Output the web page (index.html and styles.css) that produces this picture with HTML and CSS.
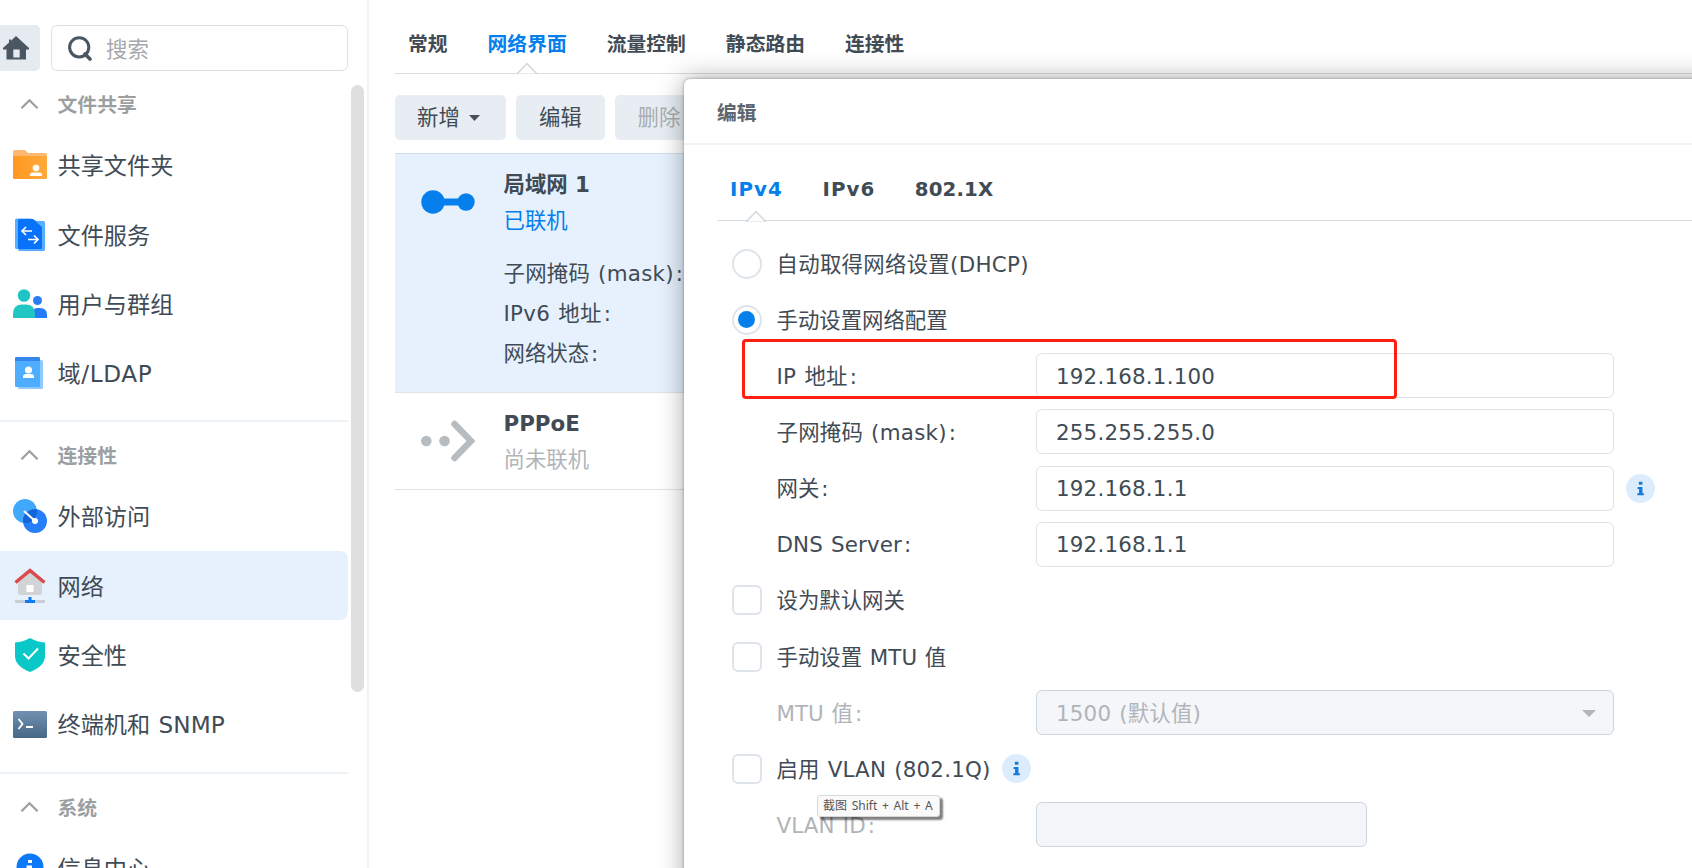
FILE: index.html
```html
<!DOCTYPE html>
<html lang="zh-CN">
<head>
<meta charset="utf-8">
<title>网络</title>
<link rel="stylesheet" href="styles.css">
</head>
<body>
<div class="app">
  <aside class="sidebar">
    <div class="top">
      <div class="home"><svg width="26" height="24" viewBox="0 0 26 24"><path fill="#4a5662" d="M13 0 26 12v1.500h-3V23.500H3.500V13.500H0V12L6 6.500V3.500h2v1.200zM10.300 13.500v8h6.400v-8z" fill-rule="evenodd"/></svg></div>
      <div class="search">
        <svg width="24" height="25" viewBox="0 0 24 25" fill="none" stroke="#4a5662" stroke-width="3"><circle cx="11.200" cy="11.300" r="9.600"/><path d="M17 18l5 5" stroke-width="3.600" stroke-linecap="round"/></svg>
        <span>搜索</span>
      </div>
    </div>
    <div class="group">
      <div class="group-title"><svg class="chev" viewBox="0 0 20 12"><path d="M1.500 10.500 10 2l8.500 8.500"/></svg>文件共享</div>
      <div class="item"><svg class="ico" viewBox="0 0 34 34"><defs><linearGradient id="or"><stop offset="0" stop-color="#ff9820"/><stop offset="1" stop-color="#ffa93c"/></linearGradient></defs><path d="M0 3.500Q0 2 1.500 2H12l3 3h17q2 0 2 2v8H0z" fill="#ffb871"/><path d="M0 8h34v21.500q0 1.500-1.500 1.500h-31Q0 31 0 29.500z" fill="url(#or)"/><circle cx="23" cy="20" r="3.300" fill="#fff"/><path d="M17 28v-1q0-2.500 2.500-2.500h7q2.500 0 2.500 2.500v1z" fill="#fff"/></svg>共享文件夹</div>
      <div class="item"><svg class="ico" viewBox="0 0 34 34"><path d="M2 2q0-1.500 1.500-1.500H18l3 2.500h9.500Q32 3 32 4.500v27q0 1.500-1.500 1.500h-24Q5 33 5 31H3.500Q2 31 2 29.500z" fill="#57adff"/><path d="M5 2.500q0-1.500 1.500-1.500H20l9 6v22.500q0 1.500-1.500 1.500h-21Q5 31 5 29.500z" fill="#0872fa"/><path d="M20 1l9 5.500V9z" fill="#60b3ff"/><path d="M19 13H9m4-4-4 4 4 4M15 21.500h10m-4-4 4 4-4 4" fill="none" stroke="#fff" stroke-width="1.700"/></svg>文件服务</div>
      <div class="item"><svg class="ico" viewBox="0 0 34 34"><circle cx="11" cy="8.500" r="6.300" fill="#20c4c6"/><circle cx="24.500" cy="13.500" r="4.500" fill="#2a7cf5"/><path d="M19 31q-1-10 5-10h3q7 0 7 7v3z" fill="#267cf8"/><path d="M0 31v-4q0-9.500 9-9.500h4q9 0 9 9.500v4z" fill="#20c6c2"/></svg>用户与群组</div>
      <div class="item"><svg class="ico" viewBox="0 0 34 34"><rect x="5" y="4" width="25" height="29" rx="1.500" fill="#8ccaff"/><rect x="2" y="1" width="25" height="30" rx="1.500" fill="#4eadff"/><path d="M2 5V2.500Q2 1 3.500 1h22Q27 1 27 2.500V5z" fill="#3586ee"/><circle cx="15.500" cy="14" r="3.500" fill="#fff"/><path d="M10 22v-1q0-3 3-3h5q3 0 3 3v1z" fill="#fff"/></svg><span class="ldap">域/LDAP</span></div>
    </div>
    <div class="group">
      <div class="group-title"><svg class="chev" viewBox="0 0 20 12"><path d="M1.500 10.500 10 2l8.500 8.500"/></svg>连接性</div>
      <div class="item"><svg class="ico" viewBox="0 0 34 34"><circle cx="12" cy="12" r="12" fill="#41a9fc"/><circle cx="22" cy="22" r="12" fill="#267efb"/><path d="M23.900 10.200A12 12 0 0 1 10.200 23.900 12 12 0 0 1 23.900 10.200z" fill="#1564d8"/><path d="M11 12l11 10" stroke="#fff" stroke-width="2"/><circle cx="22" cy="22" r="3" fill="#fff"/></svg>外部访问</div>
      <div class="item active"><svg class="ico" viewBox="0 0 34 36"><path d="M5 14 17 4l12 10v11q0 2-2 2H7q-2 0-2-2z" fill="#d1d3d6"/><path d="M2.500 14.500 17 2.500l14.500 12" fill="none" stroke="#d84a4b" stroke-width="3.500"/><rect x="13.500" y="17" width="7" height="7" fill="#fff"/><path d="M2 32h30v3H2z" fill="#c9ced6"/><path d="M15.500 29h3v3H22v3H12v-3h3.500z" fill="#0d7bf5"/></svg>网络</div>
      <div class="item"><svg class="ico" viewBox="0 0 34 34"><path d="M17 0q7 4 15 4.500V18q0 10-15 16Q2 28 2 18V4.500Q10 4 17 0z" fill="#09c8c7"/><path d="m10.500 15.500 5 5 9.500-10" fill="none" stroke="#fff" stroke-width="2"/></svg>安全性</div>
      <div class="item"><svg class="ico" viewBox="0 0 34 34"><defs><linearGradient id="tm" x2="0" y2="1"><stop offset="0" stop-color="#7291b2"/><stop offset="1" stop-color="#466786"/></linearGradient></defs><rect y="4" width="34" height="27" rx="1.500" fill="url(#tm)"/><path d="m5.500 12 4 5-4 5M13 20h7" fill="none" stroke="#fff" stroke-width="1.800"/></svg><span>终端机和 SNMP</span></div>
    </div>
    <div class="group">
      <div class="group-title"><svg class="chev" viewBox="0 0 20 12"><path d="M1.500 10.500 10 2l8.500 8.500"/></svg>系统</div>
      <div class="item"><svg class="ico" viewBox="0 0 34 34"><circle cx="17" cy="16" r="13.500" fill="#0c79f8"/><path d="M15 9h4v3h-4zM13.500 14.500h5.500V22h2v2h-7.500v-2h2v-5h-2z" fill="#fff"/></svg>信息中心</div>
    </div>
    <div class="scroll"></div>
  </aside>

  <main class="main">
    <nav class="tabs">
      <span>常规</span>
      <span class="on">网络界面<svg class="caret" viewBox="0 0 20 12"><path d="M1 11 10 1.500 19 11v1H1z" fill="#fff"/><path d="M0 11h1L10 1.500 19 11h1"/></svg></span>
      <span>流量控制</span><span>静态路由</span><span>连接性</span>
    </nav>
    <div class="buttons">
      <div class="btn add">新增<svg width="11" height="6" viewBox="0 0 11 6"><path d="M0 0h11L5.500 6z" fill="#4a5058"/></svg></div>
      <div class="btn edit">编辑</div>
      <div class="btn del">删除</div>
    </div>
    <div class="list">
      <div class="net lan">
        <svg class="net-ico" width="54" height="24" viewBox="0 0 54 24" fill="#057feb"><circle cx="12" cy="12" r="11.700"/><path d="M20 8.500h20v7H20z"/><circle cx="45" cy="12" r="8.700"/></svg>
        <div class="net-text"><b>局域网 1</b><span class="blue">已联机</span><div class="props"><span class="mask">子网掩码 (mask)<i>:</i></span><span class="v6">IPv6 地址<i>:</i></span><span>网络状态<i>:</i></span></div></div>
      </div>
      <div class="net ppp">
        <svg class="net-ico" width="54" height="42" viewBox="0 0 54 42" fill="#b7bcc0"><circle cx="5.300" cy="21" r="5.300"/><circle cx="23.500" cy="21" r="5.300"/><path d="M33.500 4 50 21 33.500 38" fill="none" stroke="#b7bcc0" stroke-width="6.500" stroke-linecap="round"/></svg>
        <div class="net-text"><b class="ppp-name">PPPoE</b><span class="off">尚未联机</span></div>
      </div>
    </div>
  </main>

  <section class="dialog">
    <header>编辑</header>
    <nav class="dtabs">
      <span class="on">IPv4<svg class="caret" viewBox="0 0 20 12"><path d="M1 11 10 1.500 19 11v1H1z" fill="#fff"/><path d="M0 11h1L10 1.500 19 11h1"/></svg></span><span>IPv6</span><span class="x">802.1X</span>
    </nav>
    <div class="form">
      <div class="row"><div class="radio"></div><label class="dhcp">自动取得网络设置(DHCP)</label></div>
      <div class="row"><div class="radio sel"></div><label>手动设置网络配置</label></div>
      <div class="row sub"><label class="v6">IP 地址<i>:</i></label><div class="input">192.168.1.100</div></div>
      <div class="row sub"><label class="mask">子网掩码 (mask)<i>:</i></label><div class="input">255.255.255.0</div></div>
      <div class="row sub"><label>网关<i>:</i></label><div class="input">192.168.1.1</div><svg class="info" viewBox="0 0 30 30"><circle cx="15" cy="15" r="15" fill="#dcecfc"/><path d="M13.300 8h3.700v3.200h-3.700zM12 13.500h5v6.300h1.500V22H11.700v-2.200h1.800v-4.300H12z" fill="#147cdc"/></svg></div>
      <div class="row sub"><label class="dns">DNS Server<i>:</i></label><div class="input">192.168.1.1</div></div>
      <div class="row"><div class="check"></div><label>设为默认网关</label></div>
      <div class="row"><div class="check"></div><label>手动设置 MTU 值</label></div>
      <div class="row sub dim"><label>MTU 值<i>:</i></label><div class="input gray"><span>1500 (默认值)</span><svg width="14" height="7" viewBox="0 0 14 7"><path d="M0 0h14L7 7z" fill="#b2b5b8"/></svg></div></div>
      <div class="row"><div class="check"></div><label class="vlan">启用 VLAN (802.1Q)</label><svg class="info" viewBox="0 0 30 30"><circle cx="15" cy="15" r="15" fill="#dcecfc"/><path d="M13.300 8h3.700v3.200h-3.700zM12 13.500h5v6.300h1.500V22H11.700v-2.200h1.800v-4.300H12z" fill="#147cdc"/></svg></div>
      <div class="row sub dim"><label class="vid">VLAN ID<i>:</i></label><div class="input gray short"></div></div>
    </div>
  </section>
  <div class="mark"></div>
  <div class="tip">截图 Shift + Alt + A</div>
</div>
</body>
</html>
```
FILE: styles.css
```css
* { box-sizing: border-box; }
body { margin: 0; font-family: "DejaVu Sans", "Noto Sans CJK SC", sans-serif; font-size: 21.400px; line-height: 26px; word-spacing: 1px; color: #414b55; background: #fff; }
svg { display: block; flex: none; }
i { font-style: normal; padding-left: 2px; }
.app { position: relative; width: 1692px; height: 868px; overflow: hidden; display: flex; }

.sidebar { position: relative; width: 369px; height: 868px; flex: none; overflow: hidden; border-right: 2px solid #f1f2f3; }
.top { display: flex; gap: 11px; padding-top: 25px; height: 70.300px; }
.home { width: 40px; height: 46px; flex: none; background: #e6ebf1; border-radius: 0 5px 5px 0; padding: 11px 0 0 3px; }
.search { width: 297px; height: 46px; flex: none; display: flex; align-items: center; gap: 14px; padding-left: 16px; border: 1.500px solid #dde1e5; border-radius: 6px; color: #a6a9ac; }
.search span { padding-top: 3px; }
.group { height: 352px; width: 348px; padding-top: 8px; border-bottom: 2px solid #edf2f6; }
.group + .group { padding-top: 7px; }
.group-title { display: flex; align-items: center; height: 52px; gap: 18.500px; padding: 3px 0 0 20px; font-size: 19.850px; font-weight: bold; color: #9c9fa2; }
.chev { width: 19px; height: 12px; margin-top: -3px; fill: none; stroke: #9c9fa2; stroke-width: 2.300; }
.item { display: flex; align-items: center; height: 69.300px; gap: 10.500px; padding: 3px 0 0 13px; font-size: 23.200px; border-radius: 0 8px 8px 0; white-space: nowrap; }
.item.active { background: #e6f1fd; }
.ldap { letter-spacing: .6px; }
.ico { width: 34px; height: 34px; margin-top: -2px; }
.active .ico { height: 36px; }
.scroll { position: absolute; left: 351px; top: 85px; width: 13px; height: 607px; border-radius: 7px; background: #dfdfdf; }

.main { flex: 1; padding-left: 26px; }
.tabs { display: flex; gap: 40px; height: 74px; padding: 16px 0 0 13px; border-bottom: 1.500px solid #d8dde1; font-size: 19.800px; font-weight: bold; line-height: 58px; white-space: nowrap; }
.tabs span, .dtabs span { position: relative; }
.on { color: #057feb; }
.caret { position: absolute; left: 50%; bottom: -2px; width: 20px; height: 12px; margin-left: -10px; fill: none; stroke: #d3d9de; stroke-width: 1.200; }
.tabs .caret { bottom: -1px; }
.buttons { display: flex; gap: 10px; padding-top: 21px; height: 79px; }
.btn { display: flex; align-items: center; height: 45px; border-radius: 5px; background: #e7edf2; }
.add { width: 111px; padding-left: 22px; gap: 9px; }
.edit { width: 89px; justify-content: center; }
.del { width: 88px; justify-content: center; color: #a9adb1; }
.list { border-top: 1px solid #d2dde6; }
.net { display: flex; gap: 28.500px; padding-left: 26px; border-bottom: 1.500px solid #dde3e7; }
.lan { height: 239px; background: #e6f1fd; padding-top: 12px; }
.lan .net-ico { margin-top: 24px; }
.ppp { height: 97px; padding-top: 12px; }
.ppp .net-ico { margin-top: 15px; }
.net-text { display: flex; flex-direction: column; line-height: 38px; white-space: nowrap; }
.net-text b { height: 36px; line-height: 37px; word-spacing: 0; }
.props { display: flex; flex-direction: column; padding-top: 14px; line-height: 40px; }
.blue { color: #057feb; }
.off { color: #b2b5b8; }
.mask { letter-spacing: .25px; }
.v6 { letter-spacing: .3px; }

.dialog { position: absolute; left: 684px; top: 79px; width: 1040px; height: 820px; background: #fff; border-radius: 6px; box-shadow: 0 0 3px rgba(0,0,0,.35), 0 0 26px rgba(0,0,0,.35); }
.dialog header { height: 66px; padding-left: 33px; line-height: 70px; font-size: 19.800px; font-weight: bold; color: #5d656e; border-bottom: 2px solid #f1f3f4; }
.dtabs { display: flex; gap: 39.500px; height: 76px; margin-left: 34px; padding: 15px 0 0 12px; line-height: 59px; font-size: 19.800px; font-weight: bold; letter-spacing: 1.100px; border-bottom: 1.500px solid #d0d9e0; }
.dtabs .caret { bottom: -1.500px; }
.x { letter-spacing: .1px; }
.form { padding: 14.500px 0 0 47.500px; }
.row { display: flex; align-items: center; height: 56.150px; white-space: nowrap; }
.row label { padding-top: 2px; }
.sub { padding-left: 45px; }
.sub label { width: 259.500px; flex: none; }
.dhcp { letter-spacing: .3px; }
.dns, .vid { letter-spacing: .15px; }
.vlan { letter-spacing: .2px; }
.radio, .check { width: 30px; height: 30px; flex: none; margin-right: 15px; border: 2px solid #dfe4eb; }
.radio { border-radius: 50%; display: flex; align-items: center; justify-content: center; }
.sel::before { content: ""; width: 17px; height: 17px; border-radius: 50%; background: #057feb; }
.check { border-radius: 6px; }
.input { display: flex; align-items: center; justify-content: space-between; width: 578px; height: 45px; padding: 2px 17px 0 19px; border: 1.500px solid #dce2e7; border-radius: 6px; letter-spacing: .2px; }
.gray { background: #f4f6fa; border-color: #ccd6e0; }
.short { width: 331px; }
.dim { color: #b0b4b8; }
.info { width: 29px; height: 29px; margin-left: 11.500px; }
.mark { position: absolute; left: 742px; top: 339px; width: 655px; height: 60px; border: 3px solid #ff1f10; border-radius: 4px; }
.tip { position: absolute; left: 817px; top: 795px; width: 123px; height: 22px; padding-left: 5px; font: 12px/20px "Noto Sans", "Noto Sans CJK SC", sans-serif; word-spacing: 1.600px; color: #575757; background: #fafafa; border: 1px solid #d8d8d8; border-radius: 3px; box-shadow: 3px 3px 2px rgba(0,0,0,.5); white-space: nowrap; }
```
